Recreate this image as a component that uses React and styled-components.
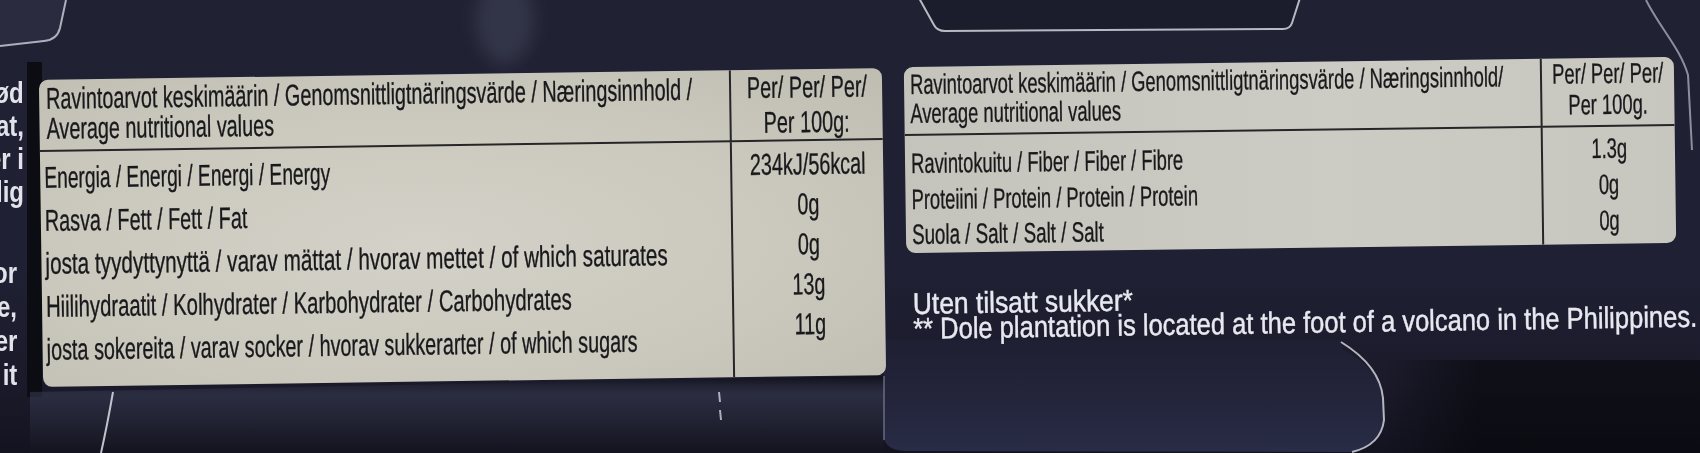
import React from "react";
import styled, { createGlobalStyle } from "styled-components";

const FONT = `"Liberation Sans", Arial, sans-serif`;

const GlobalStyle = createGlobalStyle`
  html, body { margin: 0; padding: 0; background: #1e1f31; }
  #root { width: 1700px; }
`;

const Page = styled.main`
  position: relative;
  width: 1700px;
  height: 453px;
  overflow: hidden;
  display: flex;
  align-items: flex-start;
  font-family: ${FONT};
  background: linear-gradient(180deg, #202133 0%, #1f2033 60%, #1a1a2a 85%, #131320 100%);
`;

const Decor = styled.svg`
  position: absolute;
  inset: 0;
  width: 100%;
  height: 100%;
  z-index: 0;
  pointer-events: none;
`;

const EdgeColumn = styled.div`
  flex: none;
  z-index: 1;
  width: 28px;
  display: flex;
  flex-direction: column;
  color: #e2e3ea;
  font-size: 30px;
  font-weight: 700;
`;

const FragmentGroup = styled.div`
  margin-top: ${(p) => p.$top}px;
  padding-right: ${(p) => p.$inset}px;
  overflow: hidden;
`;

const Fragment = styled.div`
  height: ${(p) => p.$lh}px;
  line-height: ${(p) => p.$lh}px;
  display: flex;
  justify-content: flex-end;
  white-space: nowrap;
`;

const Squeeze = styled.span`
  display: inline-block;
  white-space: nowrap;
  transform: scaleX(${(p) => p.$sx});
  transform-origin: ${(p) => p.$origin || "left"} center;
`;

const Panel = styled.section`
  flex: none;
  z-index: 1;
  box-sizing: border-box;
  width: ${(p) => p.$m.w}px;
  margin-top: ${(p) => p.$m.top}px;
  margin-left: ${(p) => p.$m.ml}px;
  transform: rotate(${(p) => p.$m.tilt}deg);
  border-radius: 9px;
  overflow: hidden;
  display: grid;
  grid-template-columns: ${(p) => p.$m.labelW}px 1fr;
  grid-template-rows: ${(p) => p.$m.headH}px ${(p) => p.$m.bodyH}px;
  color: #19191c;
  -webkit-text-stroke: 0.35px #19191c;
  font-size: ${(p) => p.$m.fs}px;
  background: ${(p) => p.$bg};
`;

const Cell = styled.div`
  box-sizing: border-box;
  min-width: 0;
  display: flex;
  flex-direction: column;
  align-items: ${(p) => (p.$center ? "center" : "flex-start")};
  padding-top: ${(p) => p.$pt}px;
  padding-left: ${(p) => p.$pl || 0}px;
  border-right: ${(p) => (p.$divider ? "2px solid #262629" : "none")};
  border-bottom: ${(p) => (p.$head ? "2px solid #262629" : "none")};
`;

const Line = styled.div`
  height: ${(p) => p.$lh}px;
  line-height: ${(p) => p.$lh}px;
  white-space: nowrap;
  display: flex;
  justify-content: ${(p) => (p.$center ? "center" : "flex-start")};
`;

const RightColumn = styled.div`
  flex: none;
  z-index: 1;
  width: 770px;
  margin-left: 21px;
  margin-top: 62px;
  display: flex;
  flex-direction: column;
`;

const Notes = styled.div`
  margin-top: 37px;
  padding-left: 8px;
  transform: rotate(-0.9deg);
  color: #e8e9f0;
  -webkit-text-stroke: 0.45px #e8e9f0;
  font-size: 30px;
  display: flex;
  flex-direction: column;
`;

const NoteLine = styled.div`
  height: 25px;
  line-height: 25px;
  white-space: nowrap;
`;

const LEFT = {
  w: 843, top: 74, ml: 13, tilt: -0.8, fs: 30, sx: 0.66, labelW: 692,
  headH: 72, bodyH: 235, headPad: 4, headPl: 7, headLH: 30, perLH: 35,
  bodyPad: 4, bodyPl: 4, bodyLH: 43, valPad: 3, valLH: 40,
};

const RIGHT = {
  w: 770, top: 0, ml: 0, tilt: -0.75, fs: 28, sx: 0.655, labelW: 638,
  headH: 69, bodyH: 117, headPad: 3, headPl: 6, headLH: 29, perLH: 31,
  bodyPad: 10, bodyPl: 6, bodyLH: 35.5, valPad: 3.5, valLH: 36,
};

const LEFT_ROWS = [
  { label: "Energia / Energi / Energi / Energy", value: "234kJ/56kcal", sx: 0.64 },
  { label: "Rasva / Fett / Fett / Fat", value: "0g", sx: 0.66 },
  { label: "josta tyydyttynyttä / varav mättat / hvorav mettet / of which saturates", value: "0g", sx: 0.69 },
  { label: "Hiilihydraatit / Kolhydrater / Karbohydrater / Carbohydrates", value: "13g", sx: 0.675 },
  { label: "josta sokereita / varav socker / hvorav sukkerarter / of which sugars", value: "11g", sx: 0.66 },
];

const RIGHT_ROWS = [
  { label: "Ravintokuitu / Fiber / Fiber / Fibre", value: "1.3g" },
  { label: "Proteiini / Protein / Protein / Protein", value: "0g" },
  { label: "Suola / Salt / Salt / Salt", value: "0g", sx: 0.67 },
];

function NutritionPanel({ m, heading, per, rows, bg }) {
  return (
    <Panel $m={m} $bg={bg}>
      <Cell $head $divider $pt={m.headPad} $pl={m.headPl}>
        {heading.map((t) => (
          <Line key={t} $lh={m.headLH}>
            <Squeeze $sx={m.sx}>{t}</Squeeze>
          </Line>
        ))}
      </Cell>
      <Cell $head $center $pt={0}>
        {per.map((t) => (
          <Line key={t} $lh={m.perLH} $center>
            <Squeeze $sx={m.sx} $origin="center">{t}</Squeeze>
          </Line>
        ))}
      </Cell>
      <Cell $divider $pt={m.bodyPad} $pl={m.bodyPl}>
        {rows.map((r) => (
          <Line key={r.label} $lh={m.bodyLH}>
            <Squeeze $sx={r.sx || m.sx}>{r.label}</Squeeze>
          </Line>
        ))}
      </Cell>
      <Cell $center $pt={m.valPad}>
        {rows.map((r) => (
          <Line key={r.label} $lh={m.valLH} $center>
            <Squeeze $sx={m.sx} $origin="center">{r.value}</Squeeze>
          </Line>
        ))}
      </Cell>
    </Panel>
  );
}

function Background() {
  return (
    <Decor viewBox="0 0 1700 453" preserveAspectRatio="none">
      <defs>
        <filter id="soft" x="-50%" y="-50%" width="200%" height="200%">
          <feGaussianBlur stdDeviation="8" />
        </filter>
        <linearGradient id="wall" x1="0" y1="0" x2="0" y2="1">
          <stop offset="0" stopColor="#0e0e17" stopOpacity="0.9" />
          <stop offset="0.25" stopColor="#3a3d55" stopOpacity="0.55" />
          <stop offset="1" stopColor="#14141f" stopOpacity="0.6" />
        </linearGradient>
        <linearGradient id="tab" x1="0" y1="0" x2="0" y2="1">
          <stop offset="0" stopColor="#2a2d48" stopOpacity="0.2" />
          <stop offset="1" stopColor="#2c2f4b" stopOpacity="0.9" />
        </linearGradient>
        <linearGradient id="corner" x1="0" y1="0" x2="1" y2="0">
          <stop offset="0" stopColor="#000" stopOpacity="0" />
          <stop offset="0.3" stopColor="#000" stopOpacity="0.45" />
        </linearGradient>
      </defs>

      {/* top-left fold */}
      <path d="M0 0 L66 0 L60 28 Q57 40 44 41 L0 46 Z" fill="#4a4d66" fillOpacity="0.25" />
      <path d="M66 0 L60 28 Q57 40 44 41 L0 46" fill="none" stroke="#e9eaf2" strokeOpacity="0.7" strokeWidth="2" />
      {/* dark strip between side text and table */}
      <rect x="27" y="62" width="15" height="335" fill="#0c0c13" />
      {/* smudge at top */}
      <ellipse cx="505" cy="20" rx="30" ry="45" fill="#b9bdd6" fillOpacity="0.12" filter="url(#soft)" />
      {/* top notch */}
      <path d="M919 -2 L934 25 Q937 31 945 31 L1283 29 Q1290 29 1292 23 L1300 -2 Z" fill="#15151f" fillOpacity="0.35" />
      <path d="M919 -2 L934 25 Q937 31 945 31 L1283 29 Q1290 29 1292 23 L1300 -2" fill="none" stroke="#eceef6" strokeOpacity="0.75" strokeWidth="2" />
      {/* right edge fold */}
      <path d="M1646 0 C1660 28 1680 48 1688 75 L1692 150" fill="none" stroke="#e8e9f2" strokeOpacity="0.55" strokeWidth="2" />
      {/* wall under left table */}
      <path d="M30 392 L884 376 L884 453 L30 453 Z" fill="url(#wall)" />
      <path d="M113 392 C109 415 105 435 101 453" fill="none" stroke="#e9eaf2" strokeOpacity="0.8" strokeWidth="2" />
      <path d="M719 392 L720 402 M720 410 L721 420" stroke="#e9eaf2" strokeOpacity="0.7" strokeWidth="2" />
      {/* bottom centre tab */}
      <path d="M884 372 L884 438 Q886 450 905 451 L1352 452 Q1384 446 1384 410 L1383 395 Q1378 368 1343 350 L1340 340 L884 340 Z" fill="url(#tab)" />
      <path d="M1341 342 Q1380 366 1383 398 L1384 420 Q1381 445 1352 452" fill="none" stroke="#e9eaf2" strokeOpacity="0.75" strokeWidth="2" />
      <path d="M884 376 L884 440" stroke="#8a8da8" strokeOpacity="0.5" strokeWidth="2" />
      {/* dark bottom-right */}
      <rect x="1384" y="360" width="316" height="93" fill="url(#corner)" />
    </Decor>
  );
}

export default function App() {
  return (
    <>
      <GlobalStyle />
      <Page>
        <Background />
        <EdgeColumn>
          <FragmentGroup $top={76} $inset={4}>
            {["ød", "at,", "er i", "lig"].map((t) => (
              <Fragment key={t} $lh={33}>
                <Squeeze $sx={0.8} $origin="right">{t}</Squeeze>
              </Fragment>
            ))}
          </FragmentGroup>
          <FragmentGroup $top={48} $inset={11}>
            {["or", "e,", "er", "it"].map((t) => (
              <Fragment key={t} $lh={34}>
                <Squeeze $sx={0.8} $origin="right">{t}</Squeeze>
              </Fragment>
            ))}
          </FragmentGroup>
        </EdgeColumn>

        <NutritionPanel
          m={LEFT}
          bg="radial-gradient(ellipse at 45% 55%, #d4d2c8 0%, #cac8bd 60%, #bfbdb2 100%)"
          heading={[
            "Ravintoarvot keskimäärin / Genomsnittligtnäringsvärde / Næringsinnhold /",
            "Average nutritional values",
          ]}
          per={["Per/ Per/ Per/", "Per 100g:"]}
          rows={LEFT_ROWS}
        />

        <RightColumn>
          <NutritionPanel
            m={RIGHT}
            bg="linear-gradient(90deg, #c5c4bc 0%, #cdccc4 55%, #c8c7bf 100%)"
            heading={[
              "Ravintoarvot keskimäärin / Genomsnittligtnäringsvärde / Næringsinnhold/",
              "Average nutritional values",
            ]}
            per={["Per/ Per/ Per/", "Per 100g."]}
            rows={RIGHT_ROWS}
          />
          <Notes>
            <NoteLine>
              <Squeeze $sx={0.88}>Uten tilsatt sukker*</Squeeze>
            </NoteLine>
            <NoteLine>
              <Squeeze $sx={0.85}>** Dole plantation is located at the foot of a volcano in the Philippines.</Squeeze>
            </NoteLine>
          </Notes>
        </RightColumn>
      </Page>
    </>
  );
}
